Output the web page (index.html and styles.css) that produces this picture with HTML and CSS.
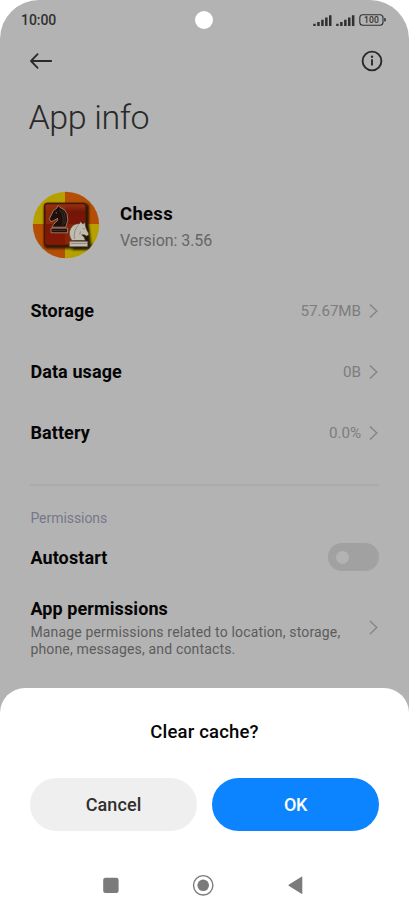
FILE: index.html
```html
<!DOCTYPE html>
<html lang="en">
<head>
<meta charset="utf-8">
<meta name="viewport" content="width=device-width, initial-scale=1">
<title>App info</title>
<link rel="stylesheet" href="styles.css">
</head>
<body>
<div class="phone">
  <main class="screen">
    <header class="status">
      <span class="time">10:00</span>
      <span class="camera"></span>
      <svg class="signals" width="74" height="14" viewBox="0 0 74 14">
        <g fill="#303030">
          <path d="M.3 10.7h2.4V13H.3zM4.2 9h2.5v4H4.2zM8.2 6.8h2.5V13H8.2zM12.1 4.6h2.5V13h-2.5zM16 2.2h2.5V13H16z"/>
          <path transform="translate(22.9 0)" d="M.3 10.7h2.4V13H.3zM4.2 9h2.5v4H4.2zM8.2 6.8h2.5V13H8.2zM12.1 4.6h2.5V13h-2.5zM16 2.2h2.5V13H16z"/>
          <path d="M71.2 5h.6q1 0 1 1v1.6q0 1-1 1h-.6z"/>
        </g>
        <rect x="46.8" y="1.8" width="23.2" height="10.4" rx="3" fill="none" stroke="#303030" stroke-width="1.1"/>
        <text class="charge" x="58.6" y="10" text-anchor="middle">100</text>
      </svg>
    </header>
    <nav class="toolbar">
      <svg width="24" height="18" viewBox="0 0 24 18" fill="none" stroke="#292929" stroke-width="1.8" stroke-linecap="round" stroke-linejoin="round"><path d="M22.2 9H2M8.6 2.2 2 9l6.6 6.8"/></svg>
      <svg width="22" height="22" viewBox="0 0 22 22"><circle cx="11" cy="11" r="9.4" fill="none" stroke="#292929" stroke-width="1.9"/><circle cx="11" cy="6.7" r="1.2" fill="#292929"/><path d="M11 9.3v6.2" stroke="#292929" stroke-width="1.9"/></svg>
    </nav>
    <h1>App info</h1>
    <section class="app">
      <svg class="logo" width="68" height="68" viewBox="0 0 68 68">
        <defs>
          <clipPath id="disc"><circle cx="34" cy="34" r="33.2"/></clipPath>
          <filter id="soft" x="-20%" y="-20%" width="150%" height="150%"><feGaussianBlur stdDeviation="1"/></filter>
          <linearGradient id="board" x2="0" y2="1"><stop stop-color="#9b3414"/><stop offset=".2" stop-color="#741507"/><stop offset="1" stop-color="#831a04"/></linearGradient>
        </defs>
        <g clip-path="url(#disc)">
          <path fill="#b6a000" d="M0 0h33v33H0zM33 33h35v35H33z"/>
          <path fill="#b54e04" d="M33 0h35v33H33zM0 33h33v35H0z"/>
          <rect x="12" y="12.5" width="45" height="45" rx="4" fill="#2a1300" filter="url(#soft)"/>
          <rect x="12.5" y="12.5" width="41.5" height="42" rx="3" fill="url(#board)" stroke="#42180a" stroke-width="1.3"/>
          <path fill="#923208" d="M14 15h19v18H14z" opacity=".7"/>
          <path fill="#923208" d="M33 33h20v20H33z" opacity=".5"/>
          <path d="M40 59h22l-3-8-2-13-8-6z" fill="#1d1200" opacity=".8" filter="url(#soft)"/>
        </g>
        <g stroke-linejoin="round">
          <path d="M20 36.2h13.8q3.4-7.5 1.2-13.5-2-5-7-6.2l-1.8-2.2-1.5 3q-4.2 1.5-5 6l-2.4 4.4 1.5 3 2.6-.9 4.2-2.4q1.2 1.8-2.2 4.2-2.6 1.7-3.4 4.6zM19 37.2h16.6v4.6H19z" fill="#1c0f0c" stroke="#b08e79" stroke-width=".8"/>
          <path d="M27.5 19q5.2 4 3.2 15.5M30.3 19q4.2 5 2.4 14" fill="none" stroke="#543b30" stroke-width=".7"/>
          <circle cx="24.2" cy="21.8" r=".6" fill="#b99c88"/><path d="M20 39.5h14.6" stroke="#5d4034" stroke-width=".6"/>
        </g>
        <g stroke-linejoin="round">
          <path d="M39.8 49.5h13.6q-.2-3.2-3.8-5.7 3.2-.6 4.6 1.3 2.6-.2 2.6-2.3l-2.2-4.2-1.2-3.6-.4-3.6-2.2 1.7-2.2-2.6-1.2 2.2q-6.6-.1-9 5.2-2.6 5.2 1.4 11.6zM37.3 50.2h18.5v5.6H37.3z" fill="#bfbcb2" stroke="#4b3826" stroke-width=".6"/>
          <path d="M46.4 34.5q-5 4-4 13.5M50.5 37l2 1M48.5 40.5l-.8 3M38.5 52.4h16.2" fill="none" stroke="#7b7265" stroke-width=".7"/>
        </g>
      </svg>
      <div class="app-text"><h2>Chess</h2><p>Version: 3.56</p></div>
    </section>
    <ul class="rows">
      <li><b>Storage</b><span class="value">57.67MB</span><svg class="chev" width="9" height="16" viewBox="0 0 9 16"><path d="M1 1.5 7.8 8 1 14.5"/></svg></li>
      <li><b>Data usage</b><span class="value">0B</span><svg class="chev" width="9" height="16" viewBox="0 0 9 16"><path d="M1 1.5 7.8 8 1 14.5"/></svg></li>
      <li><b>Battery</b><span class="value">0.0%</span><svg class="chev" width="9" height="16" viewBox="0 0 9 16"><path d="M1 1.5 7.8 8 1 14.5"/></svg></li>
    </ul>
    <section class="permissions">
      <h3>Permissions</h3>
      <div class="auto"><b>Autostart</b><span class="switch"></span></div>
      <div class="perm">
        <div><b>App permissions</b><p>Manage permissions related to location, storage,<br>phone, messages, and contacts.</p></div>
        <svg class="chev" width="9" height="16" viewBox="0 0 9 16"><path d="M1 1 7.8 7.5 1 14"/></svg>
      </div>
    </section>
  </main>
  <section class="sheet">
    <h4>Clear cache?</h4>
    <div class="buttons"><button class="cancel">Cancel</button><button class="ok">OK</button></div>
    <svg class="system" width="409" height="50" viewBox="0 0 409 50" fill="#7b7b7b">
      <rect x="103.2" y="17.7" width="15.4" height="15.3" rx="2.3"/>
      <circle cx="203.2" cy="25.3" r="9.7" fill="none" stroke="#7b7b7b" stroke-width="1.4"/><circle cx="203.2" cy="25.3" r="5.8"/>
      <path d="M302.3 17.2v16.2q0 .8-.8.4L289 26.1q-1.3-.8 0-1.6l12.5-7.8q.8-.4.8.5z"/>
    </svg>
  </section>
</div>
</body>
</html>
```
FILE: styles.css
```css
* { box-sizing: border-box; margin: 0; padding: 0; }
body { background: #fff; font-family: Roboto, "Liberation Sans", sans-serif; color: #050505; }
svg { display: block; flex: none; }
.phone { width: 409px; height: 910px; overflow: hidden; display: flex; flex-direction: column; background: #b3b3b3; clip-path: inset(0 round 39px 39px 0 0); }
.screen { height: 688px; flex: none; }
.status { height: 40px; display: grid; grid-template-columns: 1fr 18px 1fr; align-items: center; padding: 0 22px 0 21px; }
.time { font-size: 14px; font-weight: 500; line-height: 18px; color: #303030; letter-spacing: -.05px; }
.camera { width: 18px; height: 18px; border-radius: 50%; background: #fff; }
.signals { justify-self: end; }
.charge { font-size: 8.5px; font-weight: 500; letter-spacing: .2px; fill: #303030; }
.toolbar { height: 42px; display: flex; align-items: center; justify-content: space-between; padding: 0 26px 0 29px; }
h1 { height: 72px; padding-left: 28.5px; font-size: 34px; line-height: 71px; font-weight: 300; letter-spacing: -.4px; color: #292929; }
.app { height: 127px; padding: 37px 32px 0; display: flex; }
.app-text { margin-left: 20px; padding-top: 11px; }
h2 { font-size: 18.5px; line-height: 25px; font-weight: 700; letter-spacing: .3px; }
.app-text p { font-size: 16px; line-height: 27px; color: #666; letter-spacing: -.05px; }
.rows { list-style: none; height: 205px; margin: 0 30px; border-bottom: 2px solid #ababab; }
.rows li { height: 60.6px; display: flex; align-items: center; }
.rows li:last-child { height: 61.6px; }
b { font-size: 18px; line-height: 22px; font-weight: 700; letter-spacing: .1px; padding-left: .4px; }
.value { margin-left: auto; font-size: 15.2px; letter-spacing: -.05px; color: #7d7d7d; margin-right: 8px; }
.chev { fill: none; stroke: #848484; stroke-width: 1.35; margin-right: 1px; }
.permissions { padding: 22px 30px 0; }
h3 { font-size: 14px; line-height: 20px; font-weight: 400; letter-spacing: -.05px; color: #77778a; padding-left: .4px; }
.auto { height: 58px; display: flex; align-items: center; justify-content: space-between; }
.auto b { padding-top: 1px; }
.switch { width: 51px; height: 28px; border-radius: 14px; background: #a1a1a1; padding: 7.5px; }
.switch::before { content: ""; display: block; width: 13px; height: 13px; border-radius: 50%; background: #b3b3b3; }
.perm { padding-top: 12px; display: flex; align-items: center; justify-content: space-between; }
.perm b { display: block; }
.perm p { margin-top: 4px; padding-left: .4px; font-size: 14px; line-height: 17px; letter-spacing: .16px; color: #5c5c5c; }
.sheet { flex: 1; background: #fff; border-radius: 25px 25px 0 0; padding-top: 32px; }
h4 { font-size: 18.5px; line-height: 25px; font-weight: 500; letter-spacing: .18px; text-align: center; }
.buttons { display: grid; grid-template-columns: 1fr 1fr; gap: 15px; padding: 33px 30px 0; }
button { height: 53px; border: 0; border-radius: 27px; font: 500 18px/24px Roboto, "Liberation Sans", sans-serif; letter-spacing: .1px; }
.cancel { background: #efefef; color: #303030; }
.ok { background: #0d84ff; color: #fff; letter-spacing: -.3px; }
.system { margin-top: 29px; }
```
